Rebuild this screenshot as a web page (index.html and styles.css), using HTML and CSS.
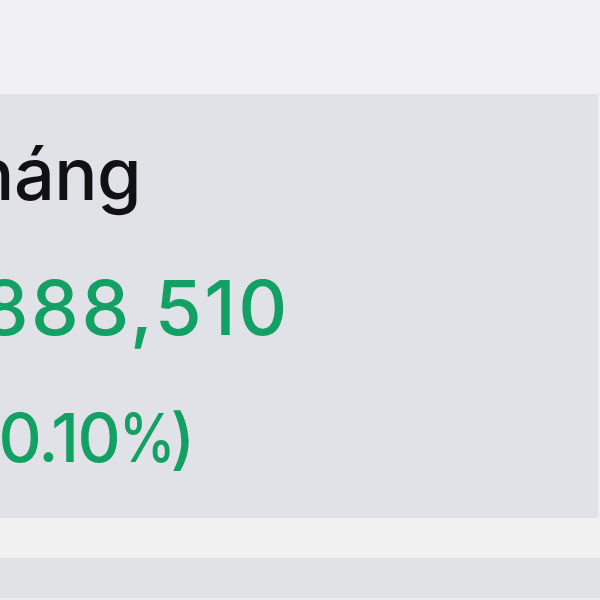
FILE: index.html
```html
<!DOCTYPE html>
<html lang="vi">
<head>
<meta charset="utf-8">
<link rel="stylesheet" href="styles.css">
</head>
<body>
<div class="screen">
  <div class="top-strip"></div>
  <section class="card">
    <div class="label">tháng</div>
    <div class="amount">1,888,510</div>
    <div class="percent">(+0.10<span class="pct">%</span>)</div>
  </section>
  <div class="gap-strip"></div>
  <div class="next-card"></div>
</div>
</body>
</html>
```
FILE: styles.css
```css
html, body {
  margin: 0;
  padding: 0;
  background: #f1f1f3;
}
body {
  font-family: "Inter", "Noto Sans", "Liberation Sans", sans-serif;
  overflow: hidden;
  width: 600px;
  height: 600px;
}
.screen {
  display: flex;
  flex-direction: column;
  width: 600px;
  height: 600px;
  overflow: hidden;
}
.top-strip {
  height: 94px;
  flex: none;
  background: #f1f1f3;
}
.card {
  flex: none;
  height: 424px;
  box-sizing: border-box;
  background: #e1e2e7;
  border-right: 2px solid #eceef2;
  padding-top: 44px;
  display: flex;
  flex-direction: column;
  white-space: nowrap;
}
.label {
  font-size: 72px;
  line-height: 72px;
  font-weight: 500;
  color: #111114;
  margin-left: -53px;
  letter-spacing: -0.5px;
}
.amount {
  font-size: 76px;
  line-height: 76px;
  font-weight: 500;
  color: #12a065;
  margin-top: 59px;
  margin-left: -77px;
  letter-spacing: 2.5px;
}
.percent {
  font-size: 67px;
  line-height: 67px;
  font-weight: 500;
  color: #12a065;
  margin-top: 59px;
  margin-left: -68px;
  letter-spacing: -1.5px;
}
.pct {
  display: inline-block;
  transform: scaleX(0.85);
  transform-origin: left center;
  margin-right: -14px;
}
.gap-strip {
  flex: none;
  height: 40px;
  box-sizing: border-box;
  background: #f1f1f2;
  border-bottom: 1px solid #eaeaed;
}
.next-card {
  flex: none;
  height: 40px;
  background: #e1e2e6;
  border-bottom: 2px solid #ececf0;
}
```
